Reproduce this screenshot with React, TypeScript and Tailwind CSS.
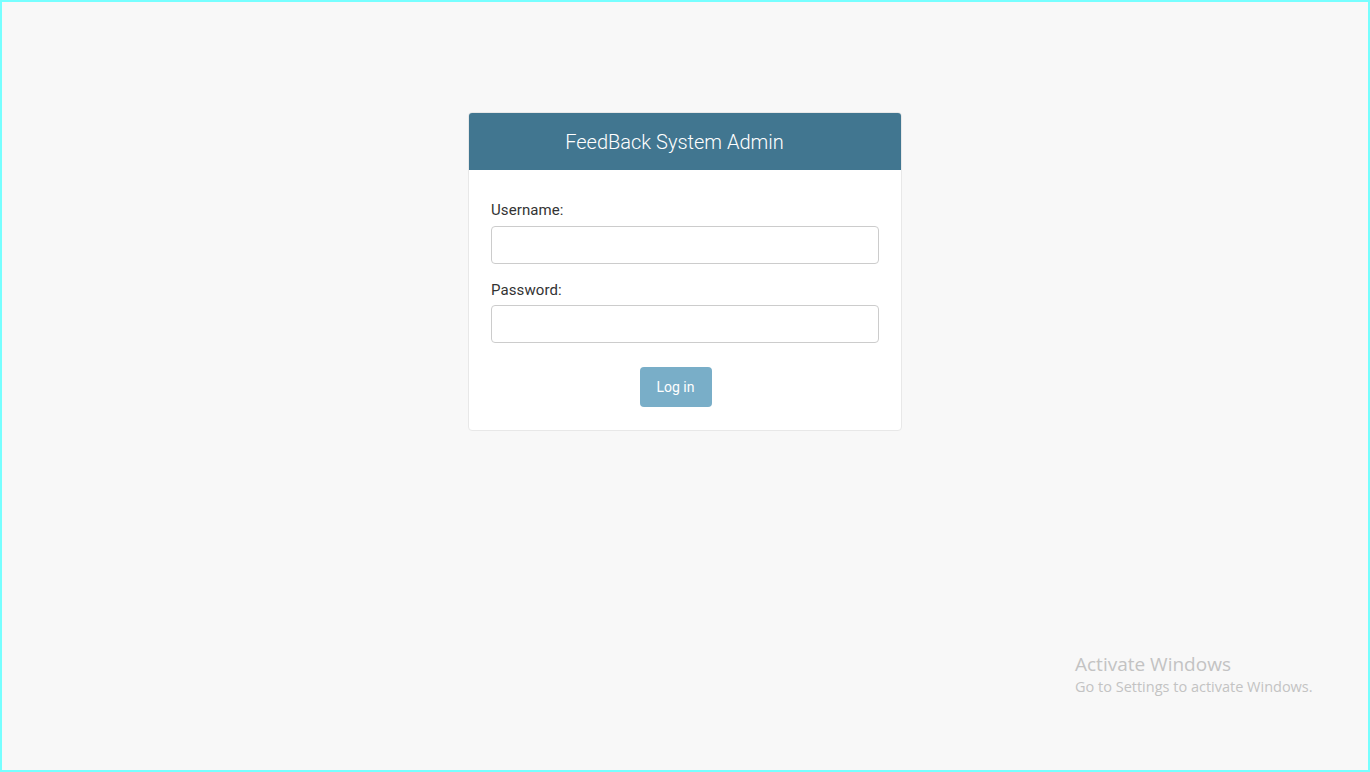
import React from "react";

export default function App() {
  return (
    <div className="relative w-[1370px] h-[772px] overflow-hidden border-2 border-[#77ffff] bg-[#f8f8f8] font-['Roboto',sans-serif] text-[#333]">
      <div className="flex flex-col items-center pt-[110px]">
        <div className="w-[434px] bg-white border border-[#e8e8e8] rounded-[4px] overflow-hidden">
          <div className="h-[57px] bg-[#417690] flex items-center justify-center pr-[21px]">
            <h1 className="text-[20px] font-light text-white">FeedBack System Admin</h1>
          </div>
          <form className="px-[22px] pt-[30px] pb-[23px]" onSubmit={(e) => e.preventDefault()}>
            <label className="block text-[15px] leading-[20px] mb-[6px] tracking-[0.1px]">Username:</label>
            <input
              type="text"
              className="block w-[388px] h-[38px] border border-[#ccc] rounded-[4px] px-2 outline-none"
            />
            <label className="block text-[15px] leading-[20px] mt-[16px] mb-[5px] tracking-[0.1px]">Password:</label>
            <input
              type="password"
              className="block w-[388px] h-[38px] border border-[#ccc] rounded-[4px] px-2 outline-none"
            />
            <div className="flex justify-center mt-[24px] pr-[19px]">
              <button
                type="submit"
                className="w-[72px] h-[40px] bg-[#79aec8] text-white text-[14px] rounded-[4px]"
              >
                Log in
              </button>
            </div>
          </form>
        </div>
      </div>

      {/* Windows activation watermark */}
      <div className="absolute left-[1073px] top-[649px] text-[#c3c3c3] font-['Open_Sans',sans-serif] pointer-events-none">
        <div className="text-[19px] leading-[26px]">Activate Windows</div>
        <div className="text-[14.5px] leading-[20px]">Go to Settings to activate Windows.</div>
      </div>
    </div>
  );
}
